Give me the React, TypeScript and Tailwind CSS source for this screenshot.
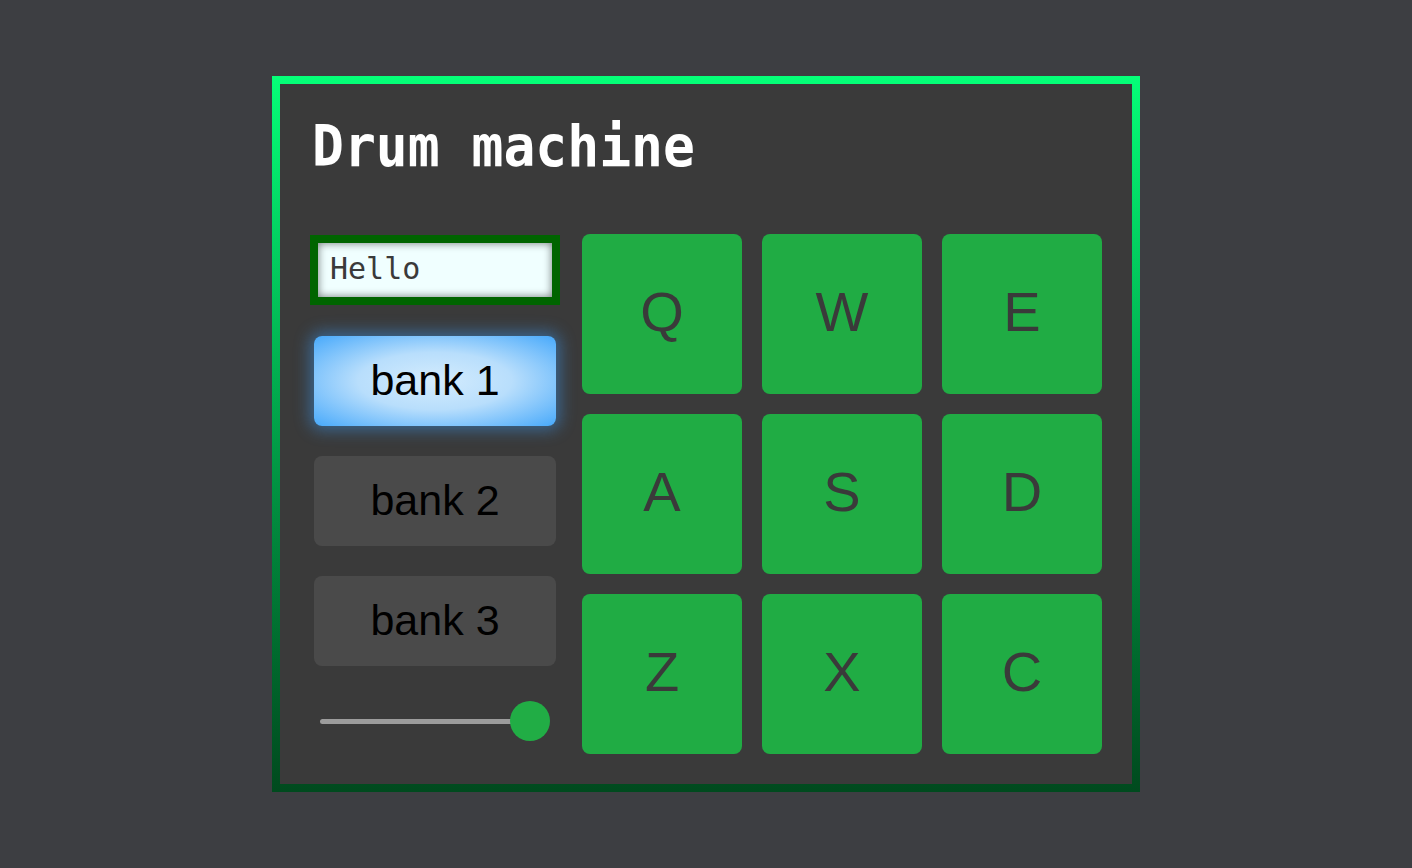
// Drum machine — pads, banks, text display and volume slider.

const PADS = ['Q', 'W', 'E', 'A', 'S', 'D', 'Z', 'X', 'C'];

const BANKS = [
  { label: 'bank 1', active: true },
  { label: 'bank 2', active: false },
  { label: 'bank 3', active: false },
];

function BankButton({ label, active }: { label: string; active: boolean }) {
  return (
    <button
      type="button"
      className={
        active
          ? 'mx-1 flex h-[90px] w-[242px] items-center justify-center rounded-lg bg-[radial-gradient(ellipse_at_center,#d4ecfd_0%,#b8defc_45%,#47a9fb_100%)] pb-[2px] text-[43px] text-black shadow-[0_0_16px_4px_rgba(60,160,255,0.45)]'
          : 'mx-1 flex h-[90px] w-[242px] items-center justify-center rounded-lg bg-[#4a4a4a] pb-[2px] text-[43px] text-black'
      }
      style={{ fontFamily: '"Liberation Sans", Arial, sans-serif' }}
    >
      {label}
    </button>
  );
}

export default function App() {
  return (
    <div className="flex min-h-screen items-center justify-center bg-[#3d3e42]">
      <div className="w-[868px] bg-gradient-to-b from-[#05ff78] to-[#004a1e] p-2">
        <div className="flex h-[700px] flex-col bg-[#3a3a3a] pl-[30px] pr-[30px]">
          <h1
            className="mt-[33px] origin-bottom scale-y-[1.08] pl-[2px] text-[53px] font-bold leading-[64px] text-white"
            style={{ fontFamily: '"DejaVu Sans Mono", monospace' }}
          >
            Drum machine
          </h1>

          <div className="mt-[53px] flex gap-[22px]">
            <div className="flex w-[250px] flex-col">
              <div
                className="mt-px flex h-[70px] w-[250px] items-center border-[8px] border-[#006400] bg-[#f0ffff] px-3 pb-[3px] text-[30px] text-[#3a3a3a] shadow-[inset_0_0_8px_rgba(0,0,0,0.55)]"
                style={{ fontFamily: '"DejaVu Sans Mono", monospace' }}
              >
                Hello
              </div>

              <div className="mt-[31px] flex flex-col gap-[30px]">
                {BANKS.map((bank) => (
                  <BankButton key={bank.label} label={bank.label} active={bank.active} />
                ))}
              </div>

              <div className="relative mt-[35px] ml-[10px] flex h-[40px] w-[230px] items-center">
                <div className="h-[5px] w-[210px] rounded-full bg-[#9c9c9c]" />
                <div className="absolute left-[190px] top-0 h-[40px] w-[40px] rounded-full bg-[#21ad45]" />
              </div>
            </div>

            <div className="grid grid-cols-[repeat(3,160px)] gap-5">
              {PADS.map((key) => (
                <div
                  key={key}
                  className="flex h-[160px] w-[160px] items-center justify-center rounded-lg bg-[#20ac44] pb-[5px] text-[56px] text-[#3a3a3a]"
                  style={{ fontFamily: '"Liberation Sans", Arial, sans-serif' }}
                >
                  {key}
                </div>
              ))}
            </div>
          </div>
        </div>
      </div>
    </div>
  );
}
